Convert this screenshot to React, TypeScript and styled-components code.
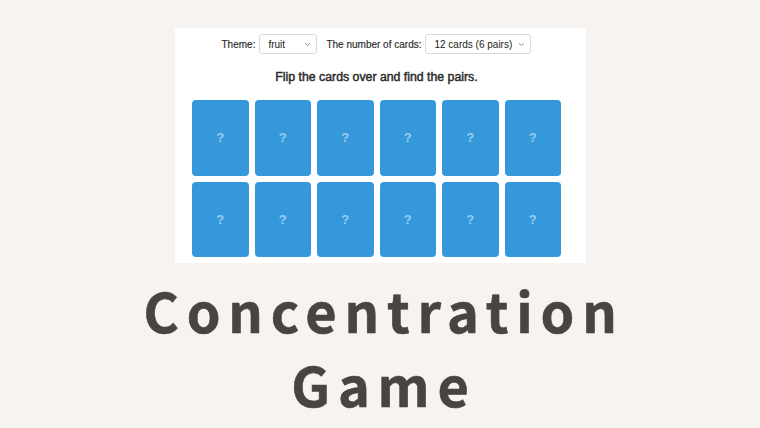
import React from "react";
import styled, { createGlobalStyle } from "styled-components";

const GlobalStyle = createGlobalStyle`
  html, body {
    margin: 0;
    padding: 0;
    background: #f6f3f0;
  }
  body {
    width: 760px;
    height: 428px;
    overflow: hidden;
  }
`;

const Page = styled.div`
  display: flex;
  flex-direction: column;
  align-items: center;
  padding-top: 28px;
`;

const Panel = styled.div`
  width: 411px;
  box-sizing: border-box;
  background: #ffffff;
  padding: 6px 24.5px 5.5px 17.5px;
  display: flex;
  flex-direction: column;
  align-items: center;
  font-family: "Liberation Sans", Arial, sans-serif;
  color: #333333;
`;

const Controls = styled.div`
  display: flex;
  align-items: center;
  height: 20px;
  font-size: 10px;
`;

const Label = styled.span<{ $first?: boolean }>`
  margin-right: 4px;
  margin-left: ${(p) => (p.$first ? "0" : "9px")};
  color: #2a2a2a;
  -webkit-text-stroke: 0.15px #2a2a2a;
`;

const SelectBox = styled.div<{ $w: number }>`
  width: ${(p) => p.$w}px;
  height: 20px;
  box-sizing: border-box;
  border: 1px solid #d9d9d9;
  border-radius: 3px;
  background: #ffffff;
  display: flex;
  align-items: center;
  justify-content: space-between;
  padding: 0 5px 0 8px;
  font-size: 10px;
  color: #222222;
`;

const Chevron = () => (
  <svg width="7" height="5" viewBox="0 0 7 5">
    <path d="M1 1.2 L3.5 3.6 L6 1.2" fill="none" stroke="#888" strokeWidth="0.9" />
  </svg>
);

const Hint = styled.p`
  margin: 13px 0 0;
  font-size: 12.3px;
  font-weight: 400;
  -webkit-text-stroke: 0.45px #2a2a2a;
  line-height: 20px;
  color: #2a2a2a;
`;

const Board = styled.div`
  margin-top: 13px;
  display: grid;
  grid-template-columns: repeat(6, 56.5px);
  grid-auto-rows: 75.5px;
  gap: 6px 6px;
`;

const Card = styled.div`
  background: #3498db;
  border-radius: 4px;
  display: flex;
  align-items: center;
  justify-content: center;
  font-size: 13px;
  font-weight: 700;
  color: rgba(255, 255, 255, 0.5);
`;

const Title = styled.h1`
  margin: 10px 0 0;
  padding-left: 8px;
  font-family: "Noto Sans CJK JP", "Noto Sans", sans-serif;
  font-weight: 700;
  font-size: 54px;
  line-height: 74px;
  letter-spacing: 7.8px;
  text-align: center;
  color: #494443;
  -webkit-text-stroke: 0.6px #494443;
`;

export default function App() {
  const cards = Array.from({ length: 12 }, (_, i) => i);
  return (
    <>
      <GlobalStyle />
      <Page>
        <Panel>
          <Controls>
            <Label $first>Theme:</Label>
            <SelectBox $w={58}>
              <span>fruit</span>
              <Chevron />
            </SelectBox>
            <Label>The number of cards:</Label>
            <SelectBox $w={106}>
              <span>12 cards (6 pairs)</span>
              <Chevron />
            </SelectBox>
          </Controls>
          <Hint>Flip the cards over and find the pairs.</Hint>
          <Board>
            {cards.map((c) => (
              <Card key={c}>?</Card>
            ))}
          </Board>
        </Panel>
        <Title>
          Concentration
          <br />
          Game
        </Title>
      </Page>
    </>
  );
}
